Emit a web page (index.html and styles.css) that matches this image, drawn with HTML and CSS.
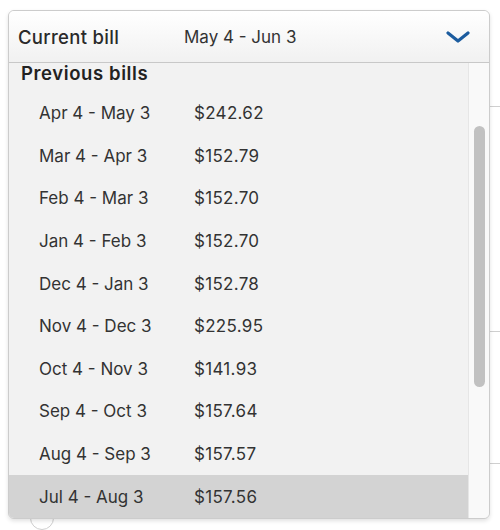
FILE: index.html
```html
<!DOCTYPE html>
<html>
<head>
<meta charset="utf-8">
<link rel="stylesheet" href="styles.css">
</head>
<body>
<div class="backdrop">
  <span class="bline l1"></span>
  <span class="bline l2"></span>
  <span class="bline l3"></span>
  <span class="bcircle"></span>
</div>
<div class="dropdown">
  <div class="header">
    <span class="h-label">Current bill</span>
    <span class="h-range">May 4 - Jun 3</span>
    <svg class="chevron" width="24" height="12" viewBox="0 0 24 12"><path d="M2 2 L12 10 L22 2" fill="none" stroke="#1c5c9f" stroke-width="3.2" stroke-linecap="round" stroke-linejoin="round"/></svg>
  </div>
  <div class="body">
    <div class="list">
      <div class="group">Previous bills</div>
      <div class="row"><span class="range">Apr 4 - May 3</span><span class="amt">$242.62</span></div>
      <div class="row"><span class="range">Mar 4 - Apr 3</span><span class="amt">$152.79</span></div>
      <div class="row"><span class="range">Feb 4 - Mar 3</span><span class="amt">$152.70</span></div>
      <div class="row"><span class="range">Jan 4 - Feb 3</span><span class="amt">$152.70</span></div>
      <div class="row"><span class="range">Dec 4 - Jan 3</span><span class="amt">$152.78</span></div>
      <div class="row"><span class="range">Nov 4 - Dec 3</span><span class="amt">$225.95</span></div>
      <div class="row"><span class="range">Oct 4 - Nov 3</span><span class="amt">$141.93</span></div>
      <div class="row"><span class="range">Sep 4 - Oct 3</span><span class="amt">$157.64</span></div>
      <div class="row"><span class="range">Aug 4 - Sep 3</span><span class="amt">$157.57</span></div>
      <div class="row active"><span class="range">Jul 4 - Aug 3</span><span class="amt">$157.56</span></div>
    </div>
    <div class="track"><div class="thumb"></div></div>
  </div>
</div>
</body>
</html>
```
FILE: styles.css
```css
html, body {
  margin: 0;
  padding: 0;
  background: #ffffff;
}
body {
  width: 500px;
  height: 530px;
  position: relative;
  overflow: hidden;
  font-family: Inter, Lato, sans-serif;
  color: #333333;
}
.backdrop {
  position: absolute;
  inset: 0;
}
.bline {
  position: absolute;
  left: 489px;
  width: 11px;
  height: 1px;
  background: #cfcfcf;
}
.l1 { top: 106px; }
.l2 { top: 331px; }
.l3 { top: 463px; }
.bcircle {
  position: absolute;
  left: 30px;
  top: 506px;
  width: 24px;
  height: 24px;
  border: 1px solid #cfcfcf;
  border-radius: 50%;
  box-sizing: border-box;
}
.dropdown {
  position: absolute;
  left: 8px;
  top: 10px;
  width: 482px;
  height: 509px;
  box-sizing: border-box;
  border: 1px solid #cccccc;
  border-radius: 6px;
  overflow: hidden;
  background: #f2f2f2;
  box-shadow: 0 2px 4px rgba(0,0,0,0.12);
  display: flex;
  flex-direction: column;
}
.header {
  height: 52px;
  flex: none;
  box-sizing: border-box;
  border-bottom: 1px solid #c8c8c8;
  background: linear-gradient(#ffffff, #f1f1f1);
  display: flex;
  align-items: center;
  color: #2a2a2a;
}
.h-label {
  margin-left: 9px;
  width: 166px;
  font-size: 18.5px;
  font-weight: 500;
  letter-spacing: 0.3px;
}
.h-range {
  flex: 1;
  font-size: 17px;
  color: #333333;
}
.chevron {
  margin-right: 19px;
  display: block;
}
.body {
  flex: 1;
  display: flex;
  min-height: 0;
}
.list {
  flex: 1;
  overflow: hidden;
}
.group {
  height: 20px;
  line-height: 20px;
  padding-bottom: 9px;
  padding-left: 12px;
  font-size: 18.5px;
  font-weight: 600;
  letter-spacing: 0.6px;
  color: #222222;
}
.row {
  height: 42.6px;
  display: flex;
  align-items: center;
  font-size: 17px;
  color: #333333;
}
.row.active {
  background: #d3d3d3;
}
.range {
  margin-left: 30px;
  width: 155px;
}
.amt {
  letter-spacing: 0.3px;
}
.track {
  width: 21px;
  flex: none;
  background: #f9f9f9;
  border-left: 1px solid #e6e6e6;
  padding-top: 63px;
  box-sizing: border-box;
}
.thumb {
  margin-left: 5px;
  width: 11px;
  height: 261px;
  border-radius: 6px;
  background: #c1c1c1;
}
```
